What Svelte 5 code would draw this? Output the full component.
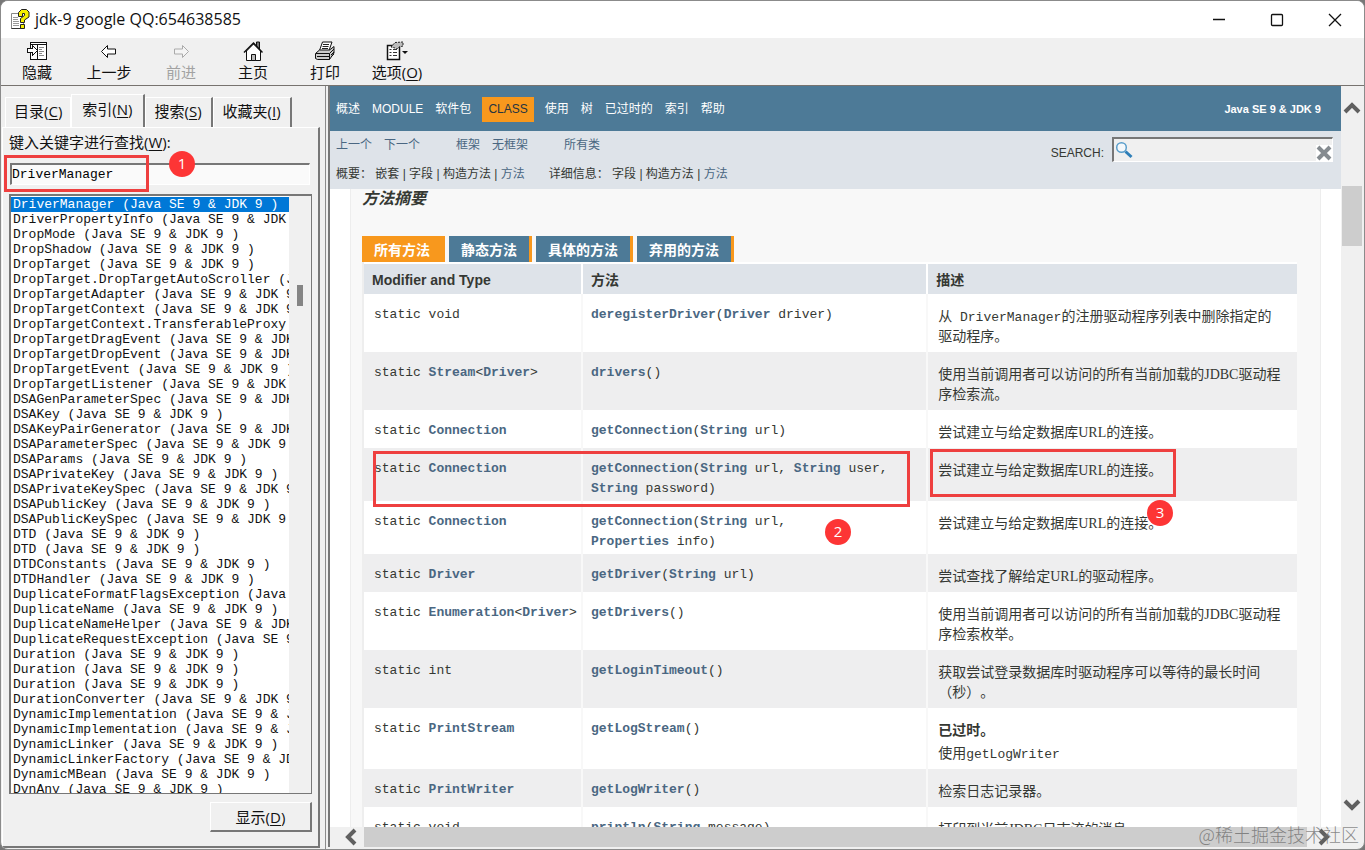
<script lang="ts">
  type Part = { text: string; link: boolean };

  const edition = ' (Java SE 9 & JDK 9 )';

  const entries = [
    'DriverManager', 'DriverPropertyInfo', 'DropMode', 'DropShadow', 'DropTarget',
    'DropTarget.DropTargetAutoScroller', 'DropTargetAdapter', 'DropTargetContext',
    'DropTargetContext.TransferableProxy', 'DropTargetDragEvent', 'DropTargetDropEvent',
    'DropTargetEvent', 'DropTargetListener', 'DSAGenParameterSpec', 'DSAKey',
    'DSAKeyPairGenerator', 'DSAParameterSpec', 'DSAParams', 'DSAPrivateKey',
    'DSAPrivateKeySpec', 'DSAPublicKey', 'DSAPublicKeySpec', 'DTD', 'DTD', 'DTDConstants',
    'DTDHandler', 'DuplicateFormatFlagsException', 'DuplicateName', 'DuplicateNameHelper',
    'DuplicateRequestException', 'Duration', 'Duration', 'Duration', 'DurationConverter',
    'DynamicImplementation', 'DynamicImplementation', 'DynamicLinker',
    'DynamicLinkerFactory', 'DynamicMBean', 'DynAny',
  ];

  const methodTabs = ['所有方法', '静态方法', '具体的方法', '弃用的方法'];

  // [name] is a link, `name` is code
  const methods = [
    { type: 'static void', sig: '[deregisterDriver]([Driver] driver)', desc: '从` DriverManager`的注册驱动程序列表中删除指定的驱动程序。' },
    { type: 'static [Stream]<[Driver]>', sig: '[drivers]()', desc: '使用当前调用者可以访问的所有当前加载的JDBC驱动程序检索流。' },
    { type: 'static [Connection]', sig: '[getConnection]([String] url)', desc: '尝试建立与给定数据库URL的连接。' },
    { type: 'static [Connection]', sig: '[getConnection]([String] url, [String] user,\n[String] password)', desc: '尝试建立与给定数据库URL的连接。' },
    { type: 'static [Connection]', sig: '[getConnection]([String] url,\n[Properties] info)', desc: '尝试建立与给定数据库URL的连接。' },
    { type: 'static [Driver]', sig: '[getDriver]([String] url)', desc: '尝试查找了解给定URL的驱动程序。' },
    { type: 'static [Enumeration]<[Driver]>', sig: '[getDrivers]()', desc: '使用当前调用者可以访问的所有当前加载的JDBC驱动程序检索枚举。' },
    { type: 'static int', sig: '[getLoginTimeout]()', desc: '获取尝试登录数据库时驱动程序可以等待的最长时间（秒）。' },
    { type: 'static [PrintStream]', sig: '[getLogStream]()', note: '已过时。', desc: '使用`getLogWriter`' },
    { type: 'static [PrintWriter]', sig: '[getLogWriter]()', desc: '检索日志记录器。' },
    { type: 'static void', sig: '[println]([String] message)', desc: '打印到当前JDBC日志流的消息。' },
  ];

  let keyword = $state('DriverManager');
  let selected = $state(0);
  let query = $state('');
  let activeTab = $state(0);

  function parts(source: string): Part[] {
    return source
      .split(/(\[\w+\])/)
      .filter(Boolean)
      .map((text) =>
        text.startsWith('[') ? { text: text.slice(1, -1), link: true } : { text, link: false }
      );
  }

  function pick(index: number) {
    selected = index;
    keyword = entries[index];
  }
</script>

{#snippet signature(source: string)}{#each parts(source) as part}{#if part.link}<a href="#top">{part.text}</a>{:else}{part.text}{/if}{/each}{/snippet}

<div class="window">
  <header class="titlebar">
    <svg width="20" height="21" viewBox="0 0 20 21">
      <path d="M1.5 4.5h8l4 4v11h-12z" fill="#fff" stroke="#888" />
      <path d="M1.5 19.5h12v-4" fill="none" stroke="#333" />
      <path d="M3 8.500h5M3 10.500h5M3 12.500h6M3 14.500h6M3 16.500h6" stroke="#999" />
      <path d="M8.500 7.500V3.500l3-3h5l2.500 2.500v5l-4.500 3v2.500h-4v-4l4-3V4.500h-2v3z" fill="#f5ee00" stroke="#222" />
      <path d="M10.500 15.500h4v4h-4z" fill="#f5ee00" stroke="#222" />
    </svg>
    <h1>jdk-9 google QQ:654638585</h1>
    <div class="controls">
      <button type="button" aria-label="最小化">
        <svg width="14" height="14" viewBox="0 0 14 14"><path d="M1 6.500h12" /></svg>
      </button>
      <button type="button" aria-label="最大化">
        <svg width="14" height="14" viewBox="0 0 14 14"><rect x="1.5" y="1.5" width="11" height="11" rx="1" /></svg>
      </button>
      <button type="button" aria-label="关闭">
        <svg width="14" height="14" viewBox="0 0 14 14"><path d="M1 1l12 12M13 1L1 13" /></svg>
      </button>
    </div>
  </header>

  <nav class="toolbar">
    <button type="button">
      <svg width="20" height="20" viewBox="0 0 20 20" shape-rendering="crispEdges">
        <path d="M3.5 1.5h16v17h-16zM3 3.5h16M10.5 4v14" fill="#fff" stroke="#111" />
        <path d="M12 6.500h5M12 8.500h3M12 10.500h5M12 12.500h3M12 14.500h5" stroke="#888" />
        <path d="M.5 7.500h5v-3l5 5-5 5v-3h-5z" fill="#fff" stroke="#111" />
      </svg>
      隐藏
    </button>
    <button type="button">
      <svg width="20" height="20" viewBox="0 0 20 20">
        <path d="M2.500 10.500l6-6v3.500h8v5h-8v3.500z" fill="#fff" stroke="#111" />
      </svg>
      上一步
    </button>
    <button type="button" disabled>
      <svg width="20" height="20" viewBox="0 0 20 20">
        <path d="M17.500 10.500l-6-6v3.500h-8v5h8v3.500z" fill="#f4f4f4" stroke="#aaa" />
      </svg>
      前进
    </button>
    <button type="button">
      <svg width="20" height="20" viewBox="0 0 20 20">
        <path d="M13.500 6V1h3v8" fill="#777" stroke="#111" />
        <path d="M3.500 10v9.500h14V10l-7-7z" fill="#fff" stroke="#111" />
        <path d="M1 11.500L10.500 2l9 9.500" fill="none" stroke="#111" stroke-width="1.500" />
        <path d="M8.500 19.500v-6h4v6z" fill="#bbb" stroke="#111" />
      </svg>
      主页
    </button>
    <button type="button">
      <svg width="20" height="20" viewBox="0 0 20 20">
        <path d="M4.500 9.500l3-8.500h9.500l-3 8.500" fill="#fff" stroke="#111" />
        <path d="M8 3.500h6M7.500 5.500h6M7 7.500h6" stroke="#222" />
        <path d="M.500 12.500l4-3.500h10l4.500-3.500V12l-4.500 6.500H2.500l-2-1z" fill="#ccc" stroke="#111" />
        <path d="M1 12.500h13.500L19 8M14.500 12.500v6M2 15.500h12M16 14l3-3M16 16l3-3" fill="none" stroke="#111" />
      </svg>
      打印
    </button>
    <button type="button">
      <svg width="22" height="20" viewBox="0 0 22 20">
        <path d="M1.500 4.500h12v14h-12z" fill="#fff" stroke="#111" stroke-width="1.500" />
        <path d="M3.500 8.500h2M3.500 11.500h2M3.500 14.500h2M7 8.500h4M7 11.500h4M7 14.500h4" stroke="#333" />
        <path d="M5 6l4-4.500 8-.500v4l-4 1-2 2-2-1z" fill="#bbb" stroke="#222" stroke-dasharray="2 1" />
        <path d="M16 10h6l-3 3z" fill="#111" />
      </svg>
      <span>选项(<u>O</u>)</span>
    </button>
  </nav>

  <div class="body">
    <aside>
      <div class="side-tabs" role="tablist">
        <button type="button" role="tab" aria-selected="false">目录(<u>C</u>)</button>
        <button type="button" role="tab" aria-selected="true" class="current">索引(<u>N</u>)</button>
        <button type="button" role="tab" aria-selected="false">搜索(<u>S</u>)</button>
        <button type="button" role="tab" aria-selected="false">收藏夹(<u>I</u>)</button>
      </div>
      <div class="side-panel">
        <label for="keyword">键入关键字进行查找(<u>W</u>):</label>
        <input id="keyword" type="text" bind:value={keyword} />
        <div class="listbox">
          <ul role="listbox" aria-label="索引">
            {#each entries as entry, index}
              <li role="option" aria-selected={index === selected}>
                <button type="button" class:selected={index === selected} onclick={() => pick(index)}>{entry}{edition}</button>
              </li>
            {/each}
          </ul>
          <div class="list-scroll"><div></div></div>
        </div>
        <button type="button" class="show">显示(<u>D</u>)</button>
      </div>
    </aside>

    <main>
      <div class="frame">
        <div class="top-nav">
          <a href="#top">概述</a>
          <a href="#top">MODULE</a>
          <a href="#top">软件包</a>
          <a href="#top" class="active">CLASS</a>
          <a href="#top">使用</a>
          <a href="#top">树</a>
          <a href="#top">已过时的</a>
          <a href="#top">索引</a>
          <a href="#top">帮助</a>
          <strong>Java SE 9 &amp; JDK 9</strong>
        </div>
        <div class="sub-nav">
          <div class="sub-links">
            <div class="row">
              <span class="group"><a href="#top">上一个</a><a href="#top">下一个</a></span>
              <span class="group"><a href="#top">框架</a><a href="#top">无框架</a></span>
              <a href="#top">所有类</a>
            </div>
            <div class="row detail">
              <span>概要： 嵌套 | 字段 | 构造方法 | <a href="#top">方法</a></span>
              <span>详细信息： 字段 | 构造方法 | <a href="#top">方法</a></span>
            </div>
          </div>
          <div class="search">
            <label for="search">SEARCH:</label>
            <div class="search-box">
              <svg width="18" height="18" viewBox="0 0 18 18">
                <circle cx="6.500" cy="6.500" r="4.800" fill="#f4f8fb" stroke="#5a9ecb" stroke-width="1.500" />
                <path d="M10.500 10.500l6 5.500" stroke="#2f7fb8" stroke-width="3" />
              </svg>
              <input id="search" type="text" bind:value={query} />
              <button type="button" aria-label="清除" onclick={() => (query = '')}>
                <svg width="16" height="16" viewBox="0 0 16 16"><path d="M2 2l12 12M14 2L2 14" stroke="#858b90" stroke-width="4" /></svg>
              </button>
            </div>
          </div>
        </div>

        <div class="page">
          <section>
            <h2>方法摘要</h2>
            <div class="method-tabs" role="tablist">
              {#each methodTabs as tab, index}
                <button
                  type="button"
                  role="tab"
                  aria-selected={index === activeTab}
                  class:active={index === activeTab}
                  onclick={() => (activeTab = index)}
                >{tab}</button>
              {/each}
            </div>
            <table>
              <thead>
                <tr><th>Modifier and Type</th><th>方法</th><th>描述</th></tr>
              </thead>
              <tbody>
                {#each methods as method}
                  <tr>
                    <td>{@render signature(method.type)}</td>
                    <td>{@render signature(method.sig)}</td>
                    <td class="desc">
                      {#if method.note}<strong>{method.note}</strong>{/if}
                      {#each method.desc.split('`') as piece, i}{#if i % 2}<code>{piece}</code>{:else}{piece}{/if}{/each}
                    </td>
                  </tr>
                {/each}
              </tbody>
            </table>
          </section>
        </div>

        <div class="hbar">
          <button type="button" aria-label="向左">
            <svg width="14" height="18" viewBox="0 0 14 18"><path d="M11 2L4 9l7 7" /></svg>
          </button>
          <div class="thumb"></div>
          <button type="button" aria-label="向右">
            <svg width="14" height="18" viewBox="0 0 14 18"><path d="M3 2l7 7-7 7" /></svg>
          </button>
        </div>
      </div>
      <div class="vbar">
        <button type="button" aria-label="向上">
          <svg width="18" height="14" viewBox="0 0 18 14"><path d="M2 11l7-7 7 7" /></svg>
        </button>
        <div class="thumb"></div>
        <button type="button" aria-label="向下">
          <svg width="18" height="14" viewBox="0 0 18 14"><path d="M2 3l7 7 7-7" /></svg>
        </button>
      </div>
    </main>
  </div>

  <div class="mark keyword-mark"></div>
  <div class="mark method-mark"></div>
  <div class="mark desc-mark"></div>
  <span class="step step-1">1</span>
  <span class="step step-2">2</span>
  <span class="step step-3">3</span>
  <div class="watermark">@稀土掘金技术社区</div>
</div>

<style>
  :global(body) {
    background: #777;
  }

  .window {
    position: relative;
    box-sizing: border-box;
    display: flex;
    flex-direction: column;
    height: 100vh;
    overflow: hidden;
    border: 1px solid #8b8b8b;
    border-radius: 8px;
    background: #f0f0f0;
    color: #111;
    font-family: 'Open Sans', 'Noto Sans CJK SC', sans-serif;
    font-size: 15px;
  }

  button {
    margin: 0;
    padding: 0;
    border: 0;
    background: none;
    color: inherit;
    font: inherit;
  }

  input {
    box-sizing: border-box;
    min-width: 0;
    outline: 0;
  }

  a {
    color: #4a6782;
    text-decoration: none;
  }

  u {
    text-underline-offset: 2px;
  }

  .titlebar {
    display: flex;
    flex: none;
    align-items: center;
    height: 37px;
    padding-left: 9px;
    background: #fff;
  }

  h1 {
    margin: 0 auto 0 5px;
    font-size: 16px;
    font-weight: 400;
    line-height: 20px;
    padding-bottom: 2px;
  }

  .controls {
    display: flex;
  }

  .controls button {
    display: grid;
    place-items: center;
    width: 58px;
    height: 36px;
  }

  .controls path,
  .controls rect {
    fill: none;
    stroke: #111;
    stroke-width: 1.3;
  }

  .toolbar {
    display: flex;
    flex: none;
    height: 47px;
    border-bottom: 1px solid #77736f;
  }

  .toolbar button {
    display: flex;
    flex-direction: column;
    align-items: center;
    gap: 2px;
    width: 72px;
    padding-top: 3px;
    line-height: 18px;
  }

  .toolbar button:disabled {
    color: #a2a2a2;
  }

  .body {
    display: flex;
    flex: 1;
    min-height: 0;
  }

  aside {
    display: flex;
    flex: none;
    flex-direction: column;
    box-sizing: border-box;
    width: 325px;
    padding: 8px 5px 1px 1px;
    border-right: 1px solid #8b8b8b;
  }

  .side-tabs {
    display: flex;
    align-items: flex-end;
    padding-left: 3px;
  }

  .side-tabs button {
    height: 30px;
    padding: 0 9px 4px;
    border: 1px solid #fff;
    border-right: 2px solid #777;
    border-bottom: 0;
    white-space: nowrap;
  }

  .side-tabs button:first-child {
    padding: 0 8px 4px;
    border-right: 1px solid #fff;
  }

  .side-tabs .current {
    height: 33px;
    padding: 0 10px 5px;
  }

  .side-panel {
    display: flex;
    flex: 1;
    flex-direction: column;
    min-height: 0;
    padding: 4px 6px 14px;
    border-top: 1px solid #fff;
    border-left: 1px solid #fff;
    border-right: 2px solid #777;
    border-bottom: 2px solid #777;
  }

  .side-panel label {
    line-height: 20px;
  }

  #keyword {
    height: 22px;
    margin: 11px 2px 9px 1px;
    padding: 0;
    border: 1px solid #fff;
    border-top: 2px solid #777;
    border-left: 2px solid #777;
    background: #fafafa;
    font-family: 'Liberation Mono', monospace;
    font-size: 13px;
  }

  .listbox {
    display: flex;
    flex: 1;
    min-height: 0;
    border: 2px solid #777;
    border-right-width: 1px;
    border-bottom-width: 1px;
    background: #fff;
  }

  ul {
    flex: 1;
    min-width: 0;
    margin: 0;
    padding: 1px 0 0;
    overflow: hidden;
    list-style: none;
    font-family: 'Liberation Mono', monospace;
    font-size: 13px;
    line-height: 15px;
  }

  li button {
    display: block;
    width: 100%;
    padding-left: 2px;
    overflow: hidden;
    text-align: left;
    white-space: pre;
  }

  li button.selected {
    background: #0078d7;
    color: #fff;
  }

  .list-scroll {
    display: flex;
    justify-content: center;
    width: 22px;
    padding-top: 89px;
    background: #f0f0f0;
  }

  .list-scroll div {
    width: 6px;
    height: 21px;
    background: #858585;
  }

  .show {
    align-self: flex-end;
    width: 102px;
    height: 30px;
    margin-top: 8px;
    border: 1px solid #fff;
    border-right: 2px solid #777;
    border-bottom: 2px solid #777;
  }

  main {
    display: flex;
    flex: 1;
    min-width: 0;
    margin: 0 2px 2px 2px;
    border-left: 2px solid #777;
    background: #fff;
  }

  .frame {
    display: flex;
    flex: 1;
    flex-direction: column;
    min-width: 0;
    color: #353833;
    font-family: 'Liberation Sans', 'Noto Sans CJK SC', sans-serif;
  }

  .top-nav {
    display: flex;
    flex: none;
    align-items: center;
    gap: 12px;
    box-sizing: border-box;
    height: 45px;
    padding: 2px 20px 0 6px;
    background: #4d7a97;
    color: #fff;
    font-size: 12px;
    line-height: 25px;
    white-space: nowrap;
  }

  .top-nav a {
    color: #fff;
  }

  .top-nav .active {
    margin: 0 -1px;
    padding: 0 6px;
    background: #f8981d;
    color: #253441;
  }

  .top-nav strong {
    margin-left: auto;
    font-size: 11px;
  }

  .sub-nav {
    display: flex;
    flex: none;
    justify-content: space-between;
    height: 58px;
    padding: 0 8px 0 6px;
    background: #dee3e9;
    font-size: 12px;
    white-space: nowrap;
  }

  .row {
    display: flex;
    gap: 36px;
    line-height: 29px;
  }

  .row.detail {
    gap: 24px;
  }

  .group {
    display: flex;
    gap: 12px;
  }

  .search {
    display: flex;
    align-items: flex-start;
    gap: 8px;
  }

  .search label {
    line-height: 44px;
  }

  .search-box {
    display: flex;
    box-sizing: border-box;
    width: 221px;
    height: 25px;
    margin-top: 6px;
    border: 1px solid #fff;
    border-top: 2px solid #777;
    border-left: 2px solid #777;
    background: #f0f0f0;
  }

  .search-box > svg {
    flex: none;
    margin: 2px 0 0 1px;
  }

  .search-box input {
    flex: 1;
    border: 0;
    background: none;
  }

  .search-box button {
    align-self: flex-end;
    height: 16px;
    background: #fff;
  }

  .search-box button svg {
    display: block;
  }

  .page {
    flex: 1;
    min-height: 0;
    padding: 0 20px;
    overflow: hidden;
  }

  section {
    padding: 0 23px 0 11px;
    border: 1px solid #ededed;
    border-top: 0;
    background: #f8f8f8;
  }

  h2 {
    margin: 0 0 27px;
    font-size: 16px;
    font-style: italic;
    line-height: 20px;
  }

  .method-tabs {
    display: flex;
    gap: 4px;
  }

  .method-tabs button {
    height: 26px;
    padding: 0 12px;
    border-right: 3px solid #f8981d;
    background: #4d7a97;
    color: #fff;
    font-size: 14px;
    font-weight: 700;
  }

  .method-tabs button.active {
    background: #f8981d;
  }

  table {
    width: 100%;
    table-layout: fixed;
    border-left: 2px solid #eee;
    border-spacing: 0;
  }

  th {
    height: 32px;
    padding: 3px 8px 0;
    border-top: 2px solid #fff;
    border-right: 2px solid #fff;
    background: #dee3e9;
    background-clip: padding-box;
    font-size: 14px;
    line-height: 27px;
    text-align: left;
    box-sizing: border-box;
  }

  th:first-child {
    width: 219px;
  }

  th:nth-child(2) {
    width: 37%;
  }

  td {
    padding: 11px 0 2px 8px;
    border-right: 2px solid #f8f8f8;
    background: #fff;
    font-family: 'Liberation Mono', monospace;
    font-size: 13px;
    line-height: 20px;
    vertical-align: top;
    white-space: pre-line;
  }

  td:first-child {
    padding-left: 10px;
  }

  td:last-child,
  th:last-child {
    border-right: 0;
  }

  tr:nth-child(even) td {
    background: #eeeeef;
  }

  td a {
    font-weight: 700;
  }

  td.desc {
    padding: 13px 14px 5px 10px;
    font-family: 'Liberation Serif', 'Noto Sans CJK SC', serif;
    font-size: 14px;
    white-space: normal;
    text-spacing-trim: space-all;
  }

  .desc strong {
    display: block;
    margin-bottom: 3px;
  }

  code {
    font-family: 'Liberation Mono', monospace;
    font-size: 13px;
    line-height: 1;
  }

  .hbar {
    display: flex;
    flex: none;
    height: 20px;
    background: #f0f0f0;
  }

  .hbar button {
    display: grid;
    place-items: center;
    width: 34px;
  }

  .hbar button:first-child {
    justify-content: end;
    padding-right: 6px;
    box-sizing: border-box;
  }

  .hbar .thumb {
    flex: 1;
    background: #cdcdcd;
  }

  .vbar {
    display: flex;
    flex: none;
    flex-direction: column;
    width: 21px;
    padding-bottom: 20px;
    background: #f0f0f0;
  }

  .vbar button {
    display: grid;
    place-items: center;
    height: 44px;
  }

  .vbar .thumb {
    height: 60px;
    margin: 56px 0 auto 1px;
    background: #cdcdcd;
  }

  .hbar path,
  .vbar path {
    fill: none;
    stroke: #606060;
    stroke-width: 4;
  }

  .mark {
    position: absolute;
    box-sizing: border-box;
    border: 3px solid #ee3f3f;
    pointer-events: none;
  }

  .keyword-mark {
    left: 3px;
    top: 154px;
    width: 145px;
    height: 37px;
  }

  .method-mark {
    left: 372px;
    top: 450px;
    width: 537px;
    height: 56px;
  }

  .desc-mark {
    left: 929px;
    top: 448px;
    width: 246px;
    height: 48px;
  }

  .step {
    position: absolute;
    width: 26px;
    height: 26px;
    border-radius: 50%;
    background: #fd3535;
    color: #fff;
    line-height: 24px;
    text-align: center;
  }

  .step-1 {
    left: 168px;
    top: 150px;
  }

  .step-2 {
    left: 824px;
    top: 518px;
  }

  .step-3 {
    left: 1146px;
    top: 499px;
  }

  .watermark {
    position: absolute;
    right: 5px;
    bottom: 2px;
    color: rgba(110, 110, 110, 0.8);
    font-family: 'Noto Sans CJK SC', sans-serif;
    font-size: 18px;
    font-weight: 300;
    line-height: 26px;
  }
</style>
